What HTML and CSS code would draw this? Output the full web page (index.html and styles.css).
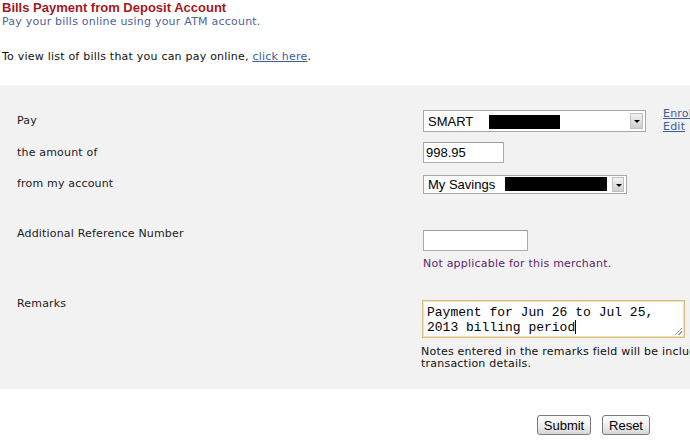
FILE: index.html
```html
<!DOCTYPE html>
<html lang="en">
<head>
    <meta charset="utf-8" />
    <title>Bills Payment from Deposit Account</title>
    <link rel="stylesheet" href="styles.css">
</head>
<body>
    <main class="page">
        <header class="intro">
            <h1>Bills Payment from Deposit Account</h1>
            <p class="subtitle">Pay your bills online using your ATM account.</p>
            <p class="bill-list">To view list of bills that you can pay online, <a href="#">click here</a>.</p>
        </header>

        <section class="payment">
            <div class="row row-pay">
                <span class="label">Pay</span>
                <div class="field">
                    <div class="select-box select-biller">
                        <span class="select-text">SMART</span>
                        <span class="redact redact-biller"></span>
                        <span class="select-arrow"></span>
                    </div>
                    <div class="side-links">
                        <a href="#">Enroll</a>
                        <a href="#">Edit</a>
                    </div>
                </div>
            </div>
            <div class="row row-amount">
                <span class="label">the amount of</span>
                <div class="field">
                    <input class="text-input amount" type="text" value="998.95" />
                </div>
            </div>
            <div class="row row-account">
                <span class="label">from my account</span>
                <div class="field">
                    <div class="select-box select-account">
                        <span class="select-text">My Savings</span>
                        <span class="redact redact-account"></span>
                        <span class="select-arrow"></span>
                    </div>
                </div>
            </div>
            <div class="row row-ref">
                <span class="label">Additional Reference Number</span>
                <div class="field field-stack">
                    <input class="text-input ref" type="text" />
                    <p class="merchant-note">Not applicable for this merchant.</p>
                </div>
            </div>
            <div class="row row-remarks">
                <span class="label">Remarks</span>
                <div class="field field-stack">
                    <div class="remarks">Payment for Jun 26 to Jul 25,<br>2013 billing period<span class="caret"></span></div>
                    <p class="remarks-note">Notes entered in the remarks field will be included in your transaction details.</p>
                </div>
            </div>
        </section>

        <div class="actions">
            <button type="button">Submit</button>
            <button type="button" class="reset">Reset</button>
        </div>
    </main>
</body>
</html>
```

FILE: styles.css
```css
html, body {
    margin: 0;
    overflow: hidden;
    background: #fff;
}

* {
    font-family: "DejaVu Sans", Verdana, sans-serif;
}

.page {
    width: 760px;
}

.intro {
    padding: 1px 2px 0;
}

.intro h1 {
    margin: 0;
    font-family: "Liberation Sans", Arial, sans-serif;
    font-size: 13px;
    line-height: 14px;
    color: #a3191d;
}

.intro p {
    margin: 0;
    font-size: 11px;
    line-height: 13px;
    letter-spacing: 0.22px;
}

.subtitle {
    color: #4f6397;
}

.intro .bill-list {
    margin-top: 22px;
    color: #111;
}

.bill-list a {
    color: #3b5c9e;
}

.payment {
    margin-top: 22px;
    padding: 24px 0 19px 17px;
    background: #f2f2f2;
    border-top: 1px solid #f8f8f8;
}

.row {
    display: grid;
    grid-template-columns: 406px auto;
    align-items: start;
}

.label {
    font-size: 11px;
    letter-spacing: 0.18px;
    color: #1a1a1a;
}

.field {
    display: flex;
    align-items: flex-start;
}

.field-stack {
    flex-direction: column;
}

.row-pay .label { line-height: 22px; }
.row-amount { margin-top: 9px; }
.row-amount .label { line-height: 21px; }
.row-account { margin-top: 12px; }
.row-account .label { line-height: 17px; }
.row-ref { margin-top: 36px; }
.row-ref .label { line-height: 12px; margin-top: -2px; }
.row-remarks { margin-top: 30px; }
.row-remarks .label { line-height: 12px; margin-top: -2px; }

/* fake dropdowns, so the masked account numbers can sit inside */
.select-box {
    position: relative;
    display: flex;
    align-items: center;
    box-sizing: border-box;
    background: #fff;
    border: 1px solid #a5a9ad;
}

.select-biller {
    width: 223px;
    height: 22px;
}

.select-account {
    width: 204px;
    height: 19px;
}

.select-text {
    padding-left: 4px;
    font-family: "Liberation Sans", Arial, sans-serif;
    font-size: 13px;
    color: #000;
}

.redact {
    position: absolute;
    background: #000;
}

.redact-biller {
    left: 65px;
    top: 4px;
    width: 71px;
    height: 14px;
}

.redact-account {
    left: 81px;
    top: 1px;
    width: 102px;
    height: 14px;
}

.select-arrow {
    position: absolute;
    right: 2px;
    top: 2px;
    bottom: 2px;
    width: 13px;
    box-sizing: border-box;
    border: 1px solid #c0c0c0;
    background: linear-gradient(#f2f2f2, #cfcfcf);
}

.select-arrow::after {
    content: "";
    position: absolute;
    left: 3px;
    top: 50%;
    margin-top: -1px;
    border-left: 3px solid transparent;
    border-right: 3px solid transparent;
    border-top: 3px solid #000;
}

.select-account .select-arrow {
    top: 1px;
    bottom: 1px;
    width: 12px;
}

.side-links {
    display: flex;
    flex-direction: column;
    margin: -3px 0 0 17px;
}

.side-links a {
    font-size: 11px;
    line-height: 13px;
    letter-spacing: 0.22px;
    color: #3b5c9e;
}

.text-input {
    box-sizing: border-box;
    margin: 0;
    padding: 0 2px;
    height: 21px;
    border: 1px solid #a9adb1;
    border-top-color: #9a9ea2;
    background: #fff;
    font-family: "Liberation Sans", Arial, sans-serif;
    font-size: 13px;
    color: #000;
}

.amount {
    width: 81px;
}

.ref {
    width: 105px;
}

.merchant-note {
    margin: 6px 0 0;
    font-size: 11px;
    line-height: 13px;
    letter-spacing: 0.22px;
    color: #5c1f6b;
}

.remarks {
    box-sizing: border-box;
    position: relative;
    width: 263px;
    height: 38px;
    margin-left: -1px;
    padding: 4px 4px 0;
    background: #fff;
    border: 1px solid #d9bd7c;
    box-shadow: inset 0 0 0 1px #f3e2b4;
    font-family: "Liberation Mono", "Courier New", monospace;
    font-size: 13px;
    line-height: 15px;
    color: #000;
}

.remarks::after {
    content: "";
    position: absolute;
    right: 2px;
    bottom: 2px;
    width: 7px;
    height: 7px;
    background: linear-gradient(135deg, transparent 45%, #999 45%, #999 55%, transparent 55%, transparent 70%, #999 70%, #999 80%, transparent 80%);
}

.caret {
    display: inline-block;
    width: 1px;
    height: 14px;
    vertical-align: -3px;
    background: #000;
}

.remarks-note {
    margin: 8px 0 0 -2px;
    width: 340px;
    font-size: 11px;
    line-height: 12px;
    letter-spacing: 0.22px;
    color: #111;
}

.actions {
    display: flex;
    gap: 11px;
    padding: 26px 0 0 537px;
}

.actions button {
    box-sizing: border-box;
    height: 20px;
    width: 54px;
    padding: 0;
    border: 1px solid #7a7a7a;
    border-radius: 3px;
    background: linear-gradient(#ffffff, #ececec 60%, #d6d6d6);
    font-family: "Liberation Sans", Arial, sans-serif;
    font-size: 13px;
    color: #000;
}

.actions .reset {
    width: 48px;
}
```
